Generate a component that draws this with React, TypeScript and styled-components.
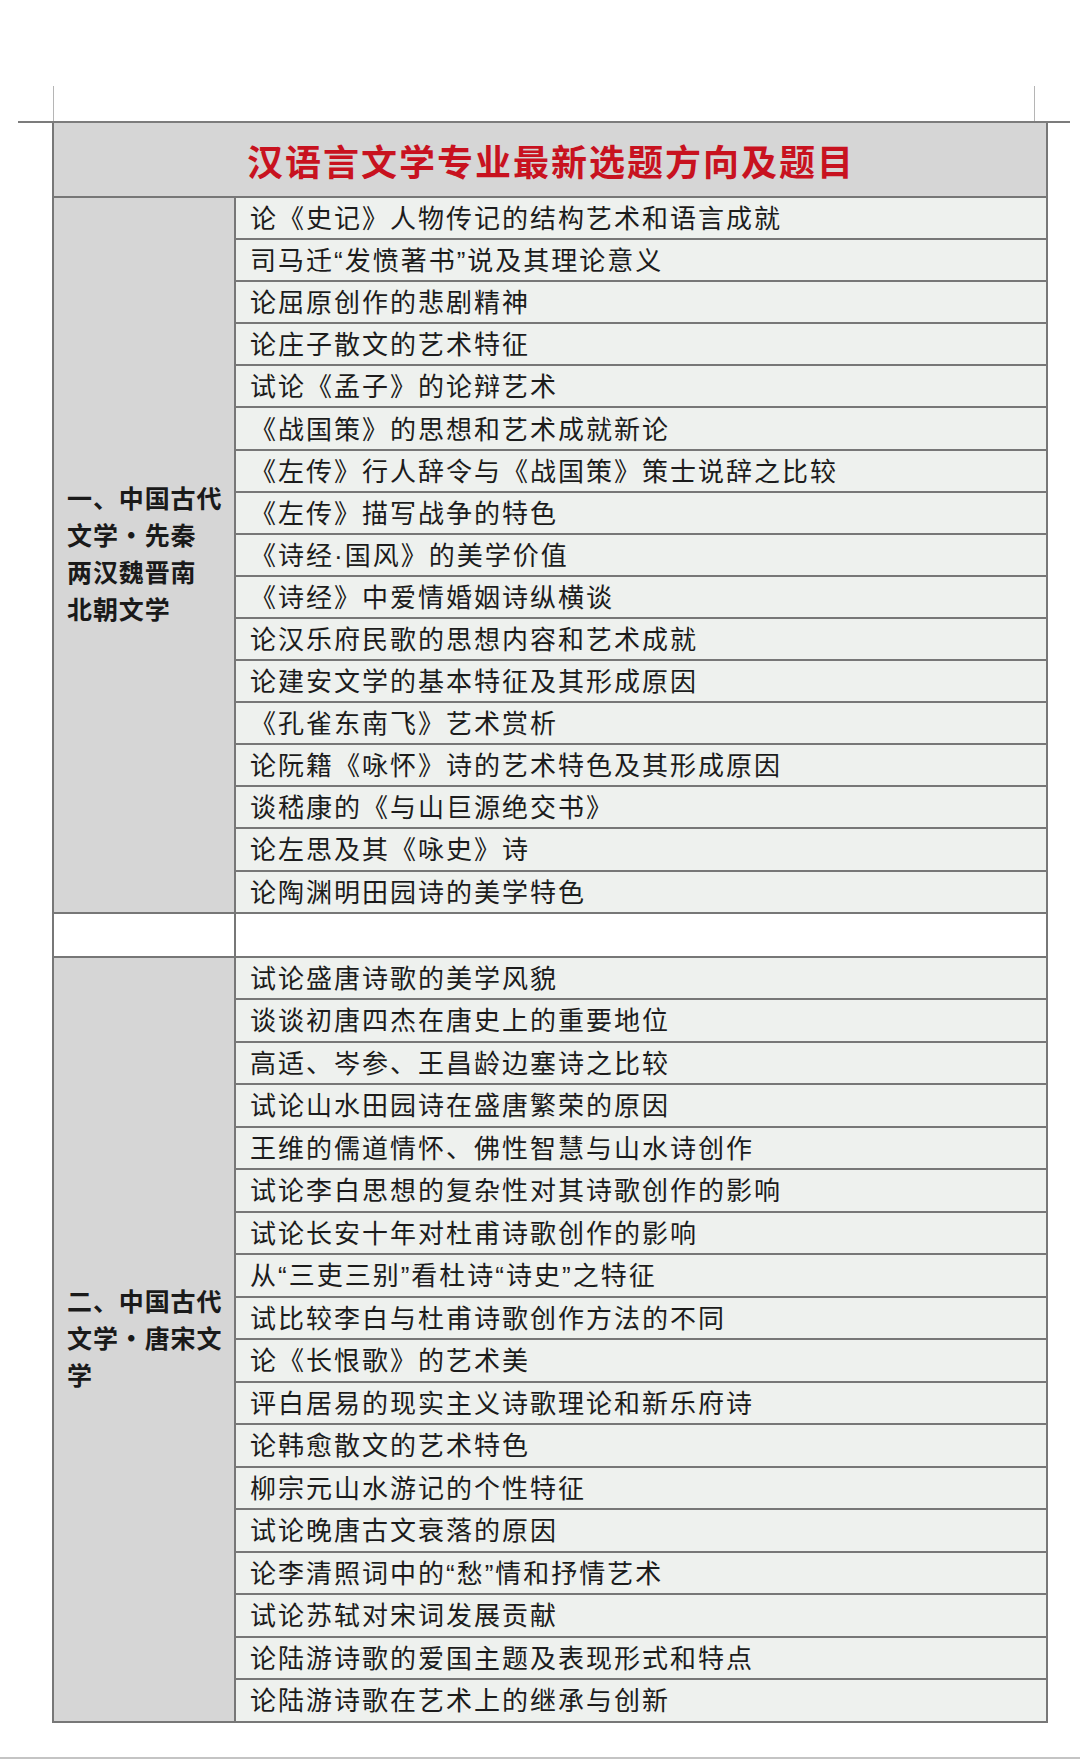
import React from "react";
import styled, { createGlobalStyle } from "styled-components";

const GlobalStyle = createGlobalStyle`
  html, body {
    margin: 0;
    padding: 0;
    background: #ffffff;
  }
  body {
    font-family: "Noto Sans CJK SC", "Noto Sans", sans-serif;
  }
`;

const Page = styled.div`
  width: 1080px;
  height: 1760px;
  background: #ffffff;
  padding-top: 86px;
  box-sizing: border-box;
  display: flex;
  flex-direction: column;
  position: relative;
`;

const CornerMarks = styled.div`
  display: flex;
  justify-content: space-between;
  padding: 0 45px 0 53px;
  height: 35px;
`;

const Tick = styled.span`
  width: 1px;
  height: 100%;
  background: #b5b5b5;
`;

const Rule = styled.div`
  height: 2px;
  margin: 0 10px 0 18px;
  background: #7c7c7c;
`;

const Table = styled.div`
  width: 996px;
  margin-left: 52px;
  background: #777777;
  padding: 0 2px 2px 2px;
  box-sizing: border-box;
  display: flex;
  flex-direction: column;
  gap: 2px;
`;

const Header = styled.div`
  height: 73px;
  background: #d6d6d6;
  display: flex;
  align-items: center;
  justify-content: center;
`;

const Title = styled.h1`
  margin: 0 0 0 2px;
  font-family: "Noto Sans CJK SC", sans-serif;
  font-size: 36px;
  font-weight: 700;
  letter-spacing: 2px;
  color: #c8121f;
`;

const Section = styled.div`
  display: flex;
  gap: 2px;
`;

const Label = styled.div<{ $blank?: boolean }>`
  width: 180px;
  flex: none;
  background: ${(p) => (p.$blank ? "#ffffff" : "#d6d6d6")};
  display: flex;
  align-items: center;
  padding: 0 0 4px 13px;
  box-sizing: border-box;
  font-size: 25px;
  font-weight: 700;
  letter-spacing: 0.9px;
  line-height: 37px;
  color: #1a1a1a;
  white-space: nowrap;
`;

const Items = styled.div`
  flex: 1;
  display: flex;
  flex-direction: column;
  gap: 2px;
`;

const Item = styled.div<{ $h: number; $blank?: boolean }>`
  height: ${(p) => p.$h}px;
  background: ${(p) => (p.$blank ? "#ffffff" : "#eef1ee")};
  display: flex;
  align-items: center;
  padding: 0 0 3px 14px;
  box-sizing: border-box;
  font-family: "Liberation Sans", "Noto Sans CJK SC", sans-serif;
  font-size: 26px;
  letter-spacing: 2px;
  color: #1c1c1c;
  white-space: nowrap;
`;

const BottomLine = styled.div`
  position: absolute;
  left: 0;
  right: 0;
  bottom: 1px;
  height: 2px;
  background: #c4c4c4;
`;

const groupOne = [
  "论《史记》人物传记的结构艺术和语言成就",
  "司马迁“发愤著书”说及其理论意义",
  "论屈原创作的悲剧精神",
  "论庄子散文的艺术特征",
  "试论《孟子》的论辩艺术",
  "《战国策》的思想和艺术成就新论",
  "《左传》行人辞令与《战国策》策士说辞之比较",
  "《左传》描写战争的特色",
  "《诗经·国风》的美学价值",
  "《诗经》中爱情婚姻诗纵横谈",
  "论汉乐府民歌的思想内容和艺术成就",
  "论建安文学的基本特征及其形成原因",
  "《孔雀东南飞》艺术赏析",
  "论阮籍《咏怀》诗的艺术特色及其形成原因",
  "谈嵇康的《与山巨源绝交书》",
  "论左思及其《咏史》诗",
  "论陶渊明田园诗的美学特色",
];

const groupTwo = [
  "试论盛唐诗歌的美学风貌",
  "谈谈初唐四杰在唐史上的重要地位",
  "高适、岑参、王昌龄边塞诗之比较",
  "试论山水田园诗在盛唐繁荣的原因",
  "王维的儒道情怀、佛性智慧与山水诗创作",
  "试论李白思想的复杂性对其诗歌创作的影响",
  "试论长安十年对杜甫诗歌创作的影响",
  "从“三吏三别”看杜诗“诗史”之特征",
  "试比较李白与杜甫诗歌创作方法的不同",
  "论《长恨歌》的艺术美",
  "评白居易的现实主义诗歌理论和新乐府诗",
  "论韩愈散文的艺术特色",
  "柳宗元山水游记的个性特征",
  "试论晚唐古文衰落的原因",
  "论李清照词中的“愁”情和抒情艺术",
  "试论苏轼对宋词发展贡献",
  "论陆游诗歌的爱国主题及表现形式和特点",
  "论陆游诗歌在艺术上的继承与创新",
];

const sections = [
  { label: ["一、中国古代", "文学·先秦", "两汉魏晋南", "北朝文学"], items: groupOne, h: 40.1 },
  { label: [], items: [""], h: 42, blank: true },
  { label: ["二、中国古代", "文学·唐宋文", "学"], items: groupTwo, h: 40.5 },
];

export default function App() {
  return (
    <>
      <GlobalStyle />
      <Page>
        <CornerMarks>
          <Tick />
          <Tick />
        </CornerMarks>
        <Rule />
        <Table>
          <Header>
            <Title>汉语言文学专业最新选题方向及题目</Title>
          </Header>
          {sections.map((s, i) => (
            <Section key={i}>
              <Label $blank={s.blank}>
                <div>
                  {s.label.map((line, j) => (
                    <div key={j}>{line}</div>
                  ))}
                </div>
              </Label>
              <Items>
                {s.items.map((t, j) => (
                  <Item key={j} $h={s.h} $blank={s.blank}>
                    {t}
                  </Item>
                ))}
              </Items>
            </Section>
          ))}
        </Table>
        <BottomLine />
      </Page>
    </>
  );
}
